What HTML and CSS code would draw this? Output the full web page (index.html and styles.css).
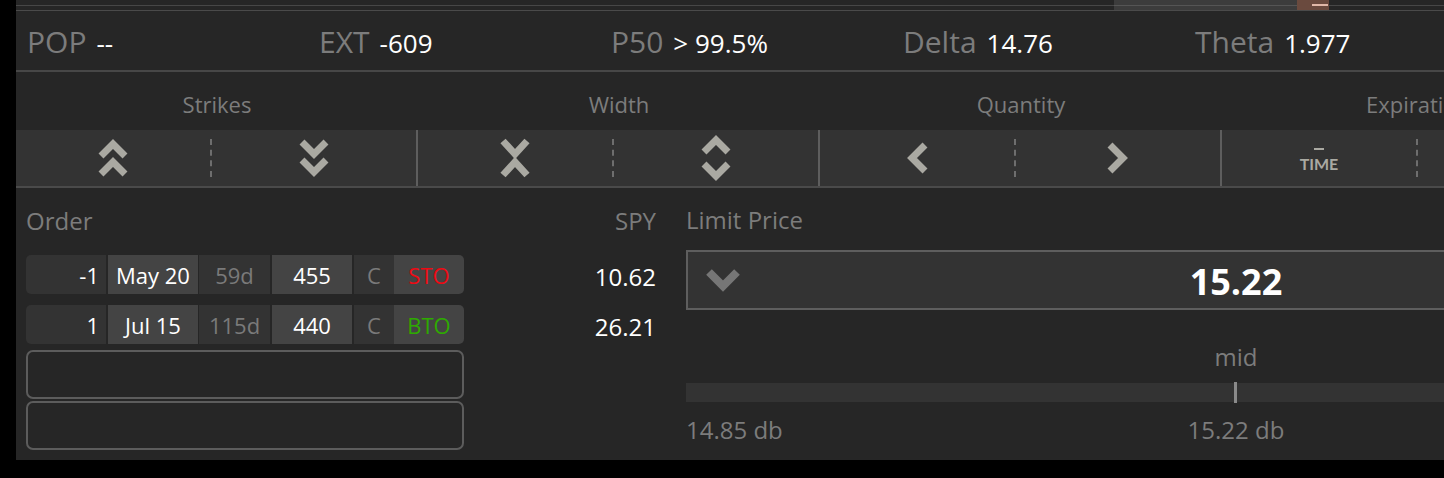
FILE: index.html
```html
<!DOCTYPE html>
<html lang="en">
<head>
    <meta charset="UTF-8">
    <meta name="viewport" content="width=device-width, initial-scale=1.0">
    <title>Trade</title>
    <link rel="stylesheet" href="styles.css">
</head>
<body>
    <div class="panel">
        <div class="topbar">
            <div class="thumb"></div>
            <div class="knob"><span></span></div>
        </div>

        <div class="stats">
            <div class="stat"><span class="lbl">POP</span><span class="val">--</span></div>
            <div class="stat"><span class="lbl">EXT</span><span class="val">-609</span></div>
            <div class="stat"><span class="lbl">P50</span><span class="val">&gt; 99.5%</span></div>
            <div class="stat"><span class="lbl">Delta</span><span class="val">14.76</span></div>
            <div class="stat"><span class="lbl">Theta</span><span class="val">1.977</span></div>
        </div>

        <div class="group-labels">
            <div class="glabel">Strikes</div>
            <div class="glabel">Width</div>
            <div class="glabel">Quantity</div>
            <div class="glabel">Expiration</div>
        </div>

        <div class="groups">
            <div class="group">
                <button class="btn">
                    <svg width="30" height="38" viewBox="0 0 30 38"><polyline points="3,17 15,5 27,17"/><polyline points="3,35 15,23 27,35"/></svg>
                </button>
                <span class="dash"></span>
                <button class="btn">
                    <svg width="30" height="38" viewBox="0 0 30 38"><polyline points="3,3 15,15 27,3"/><polyline points="3,21 15,33 27,21"/></svg>
                </button>
            </div>
            <div class="group">
                <button class="btn">
                    <svg width="30" height="40" viewBox="0 0 30 40"><polyline points="3,3 15,16 27,3"/><polyline points="3,37 15,24 27,37"/></svg>
                </button>
                <span class="dash"></span>
                <button class="btn">
                    <svg width="30" height="46" viewBox="0 0 30 46"><polyline points="3,17 15,5 27,17"/><polyline points="3,29 15,41 27,29"/></svg>
                </button>
            </div>
            <div class="group">
                <button class="btn">
                    <svg width="24" height="34" viewBox="0 0 24 34"><polyline points="20,4 7,17 20,30"/></svg>
                </button>
                <span class="dash"></span>
                <button class="btn">
                    <svg width="24" height="34" viewBox="0 0 24 34"><polyline points="4,4 17,17 4,30"/></svg>
                </button>
            </div>
            <div class="group">
                <button class="btn time">
                    <span class="time-bar"></span>
                    <span>TIME</span>
                </button>
                <span class="dash"></span>
                <button class="btn time">
                    <span class="time-bar"></span>
                    <span>TIME</span>
                </button>
            </div>
        </div>

        <div class="lower">
            <div class="order">
                <div class="head">Order</div>
                <div class="leg">
                    <div class="cell qty">-1</div>
                    <div class="cell exp light">May 20</div>
                    <div class="cell dte dim">59d</div>
                    <div class="cell strike light">455</div>
                    <div class="cell type dim">C</div>
                    <div class="cell side light sto">STO</div>
                </div>
                <div class="leg last">
                    <div class="cell qty">1</div>
                    <div class="cell exp light">Jul 15</div>
                    <div class="cell dte dim">115d</div>
                    <div class="cell strike light">440</div>
                    <div class="cell type dim">C</div>
                    <div class="cell side light bto">BTO</div>
                </div>
                <div class="leg empty"></div>
                <div class="leg empty"></div>
            </div>

            <div class="spy">
                <div class="head">SPY</div>
                <div class="price">10.62</div>
                <div class="price">26.21</div>
            </div>

            <div class="limit">
                <div class="head">Limit Price</div>
                <div class="price-box">
                    <svg class="caret" width="36" height="26" viewBox="0 0 36 26"><polyline points="4,5 18,19 32,5"/></svg>
                    <span class="price-val">15.22</span>
                    <span></span>
                </div>
                <div class="mid">mid</div>
                <div class="track"><span class="tick"></span></div>
                <div class="ticks">
                    <span>14.85 db</span>
                    <span>15.22 db</span>
                    <span>15.59 db</span>
                </div>
            </div>
        </div>
    </div>
</body>
</html>
```

FILE: styles.css
```css
body {
    margin: 0;
    background-color: #000;
    font-family: "Open Sans", sans-serif;
    color: #fff;
    overflow: hidden;
    height: 478px;
}

.panel {
    margin-left: 16px;
    width: 1800px;
    height: 460px;
    background-color: #262626;
}

/* top scroller */
.topbar {
    display: flex;
    height: 10px;
    border-bottom: 1px solid #4a4a4a;
    background: linear-gradient(#262626 5px, #474747 5px, #474747 6px, #262626 6px);
}

.thumb {
    margin-left: 1098px;
    width: 183px;
    background: linear-gradient(#3c3c3c 5px, #555 5px, #555 6px, #3c3c3c 6px);
}

.knob {
    width: 32px;
    background-color: #6a4a3e;
    display: flex;
    align-items: center;
    justify-content: flex-end;
    padding-right: 1px;
    box-sizing: border-box;
}

.knob span {
    width: 16px;
    height: 2px;
    background-color: #e0b8a8;
}

/* stats */
.stats {
    display: flex;
    height: 57px;
    padding-top: 2px;
    border-bottom: 2px solid #474747;
    align-items: center;
}

.stat {
    width: 292px;
    padding-left: 11px;
    box-sizing: border-box;
    white-space: pre;
    display: flex;
    align-items: baseline;
}

.lbl {
    color: #7c7c7c;
    font-size: 30px;
}

.val {
    color: #fff;
    font-size: 26px;
    margin-left: 10px;
}

/* button groups */
.group-labels {
    display: flex;
    height: 58px;
    align-items: center;
}

.glabel {
    width: 402px;
    text-align: center;
    font-size: 22px;
    color: #7c7c7c;
    padding-top: 6px;
}

.glabel:nth-child(4) {
    padding-right: 10px;
    box-sizing: border-box;
}

.groups {
    display: flex;
    height: 56px;
    background-color: #333;
    border-bottom: 2px solid #4a4a4a;
}

.group {
    width: 402px;
    display: flex;
    align-items: center;
    border-right: 2px solid #5e5e5e;
    box-sizing: border-box;
}

.btn {
    flex: 1;
    height: 100%;
    background: none;
    border: none;
    padding: 0;
    display: flex;
    align-items: center;
    justify-content: center;
}

.btn:first-child {
    flex: 0 0 194px;
}

.btn svg polyline {
    fill: none;
    stroke: #aaa9a2;
    stroke-width: 7;
    stroke-linejoin: miter;
    stroke-linecap: butt;
}

.dash {
    width: 0;
    height: 38px;
    border-left: 2px dashed #6e6e6e;
}

.time {
    flex-direction: column;
    gap: 4px;
    color: #aaa9a2;
    font-family: Lato, sans-serif;
    font-weight: bold;
    font-size: 16px;
    padding-top: 4px;
}

.time-bar {
    width: 10px;
    height: 2px;
    background-color: #aaa9a2;
}

/* order area */
.lower {
    display: flex;
    padding: 18px 0 0 10px;
}

.head {
    height: 49px;
    font-size: 24px;
    line-height: 30px;
    color: #7c7c7c;
}

.order {
    width: 438px;
}

.leg {
    display: flex;
    height: 39px;
    margin-bottom: 11px;
    border-radius: 5px;
    overflow: hidden;
    font-size: 22px;
}

.leg.last {
    margin-bottom: 6px;
}

.cell {
    display: flex;
    align-items: center;
    justify-content: center;
    background-color: #333;
    margin-right: 2px;
}

.light {
    background-color: #444;
}

.dim {
    color: #7a7a7a;
}

.qty {
    width: 80px;
    justify-content: flex-end;
    padding-right: 7px;
    box-sizing: border-box;
}

.exp { width: 90px; margin-right: 1px; }
.dte { width: 71px; }
.strike { width: 80px; }
.type { width: 40px; margin-right: 0; }
.side { width: 70px; margin-right: 0; }

.sto { color: #ee0a14; }
.bto { color: #2eaa00; }

.leg.empty {
    height: 49px;
    margin-bottom: 2px;
    border: 2px solid #5c5c5c;
    border-radius: 7px;
    box-sizing: border-box;
}

.spy {
    width: 192px;
    text-align: right;
}

.spy .head {
    height: 51px;
}

.price {
    height: 50px;
    line-height: 39px;
    font-size: 24px;
}

.limit {
    margin-left: 30px;
    width: 1100px;
}

.limit .head {
    height: 44px;
    line-height: 28px;
}

.price-box {
    height: 60px;
    border: 2px solid #5e5e5e;
    background-color: #333;
    box-sizing: border-box;
    display: grid;
    grid-template-columns: 1fr auto 1fr;
    align-items: center;
}

.caret {
    margin-left: 17px;
}

.caret polyline {
    fill: none;
    stroke: #767676;
    stroke-width: 8;
    stroke-linejoin: miter;
}

.price-val {
    font-size: 36px;
    font-weight: bold;
    padding-top: 2px;
}

.mid {
    margin-top: 32px;
    line-height: 30px;
    font-size: 24px;
    color: #7c7c7c;
    text-align: center;
}

.track {
    position: relative;
    margin-top: 11px;
    height: 19px;
    background-color: #333;
}

.tick {
    position: absolute;
    left: 548px;
    top: -1px;
    width: 3px;
    height: 21px;
    background-color: #8a8a8a;
}

.ticks {
    display: flex;
    justify-content: space-between;
    margin-top: 13px;
    line-height: 30px;
    font-size: 24px;
    color: #7c7c7c;
}
```
